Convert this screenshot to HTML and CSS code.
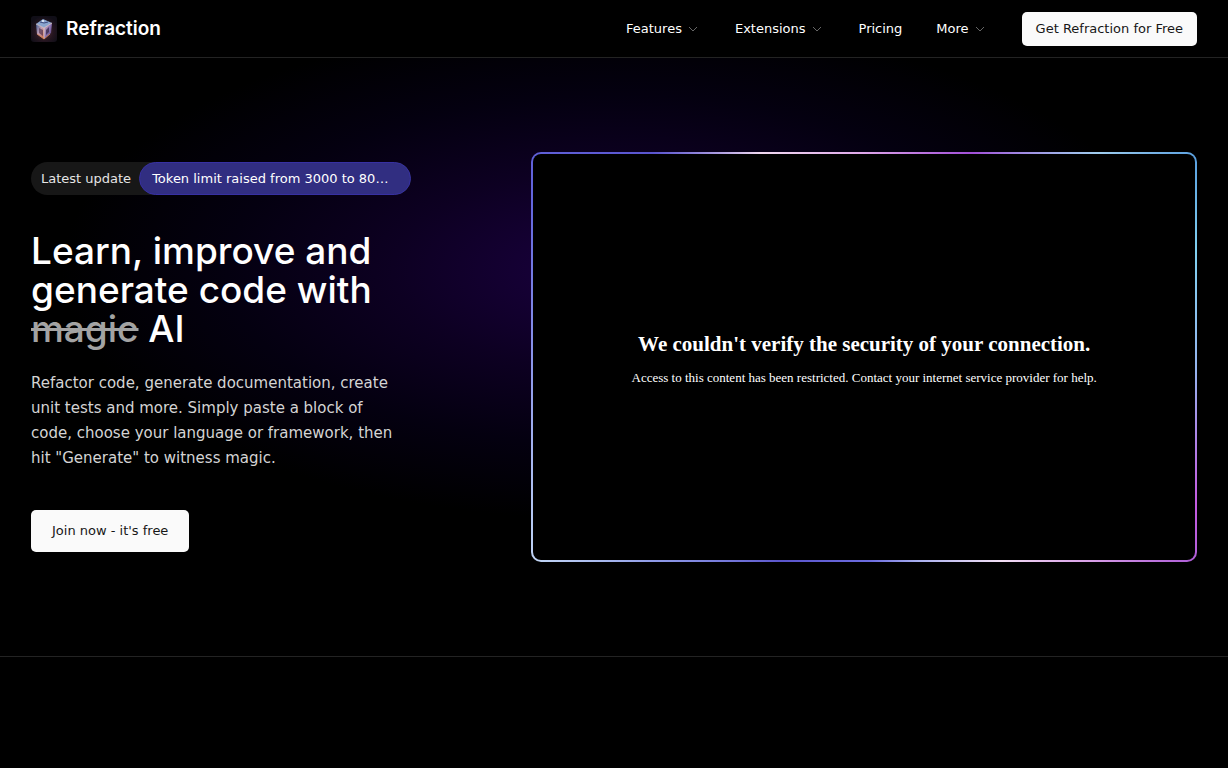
FILE: index.html
```html
<!DOCTYPE html>
<html lang="en">
<head>
  <meta charset="UTF-8">
  <meta name="viewport" content="width=device-width, initial-scale=1">
  <title>Refraction</title>
  <link rel="stylesheet" href="styles.css">
</head>
<body>
  <header class="site-header">
    <a href="#" class="brand">
      <svg class="logo" viewBox="0 0 26 26" aria-hidden="true">
        <defs>
          <radialGradient id="glow" cx="50%" cy="60%" r="60%">
            <stop offset="0" stop-color="#5a3038"/>
            <stop offset="0.6" stop-color="#24151f"/>
            <stop offset="1" stop-color="#100e17"/>
          </radialGradient>
          <linearGradient id="left" x1="0" y1="0" x2="1" y2="1">
            <stop offset="0" stop-color="#3c5f96"/>
            <stop offset="0.5" stop-color="#c59fb4"/>
            <stop offset="1" stop-color="#c4623f"/>
          </linearGradient>
          <linearGradient id="right" x1="0" y1="0" x2="1" y2="1">
            <stop offset="0" stop-color="#d9b7bd"/>
            <stop offset="0.5" stop-color="#8a74b4"/>
            <stop offset="1" stop-color="#4b3567"/>
          </linearGradient>
        </defs>
        <rect width="26" height="26" rx="3" fill="url(#glow)"/>
        <path d="M5 8l7-5 9 4-8 5z" fill="#8aa5cf"/>
        <path d="M5 8l8 4v11l-7-5z" fill="url(#left)"/>
        <path d="M13 12l8-5-1 10-7 6z" fill="url(#right)"/>
        <path d="M8 12l4 2v6l-4-3z" fill="#40213f" opacity="0.6"/>
        <path d="M15 14l3-3v5l-3 3z" fill="#2c203f" opacity="0.7"/>
        <path d="M5 8l8 4 8-5M13 12v11" fill="none" stroke="#f0d8d2" opacity="0.7"/>
        <path d="M6 18l7 5 6-5" fill="none" stroke="#e08a58" opacity="0.8"/>
        <path d="M9 6l4 1 4-1" fill="none" stroke="#3c4a7c"/>
        <circle cx="12" cy="5" r="1" fill="#eef5ff"/>
      </svg>
      <span>Refraction</span>
    </a>
    <nav class="main-nav">
      <button type="button" class="nav-item">Features
        <svg class="chevron" viewBox="0 0 16 16" aria-hidden="true"><path d="M4 6l4 4 4-4"/></svg>
      </button>
      <button type="button" class="nav-item">Extensions
        <svg class="chevron" viewBox="0 0 16 16" aria-hidden="true"><path d="M4 6l4 4 4-4"/></svg>
      </button>
      <a href="#" class="nav-item">Pricing</a>
      <button type="button" class="nav-item">More
        <svg class="chevron" viewBox="0 0 16 16" aria-hidden="true"><path d="M4 6l4 4 4-4"/></svg>
      </button>
      <a href="#" class="btn btn-small">Get Refraction for Free</a>
    </nav>
  </header>

  <main class="hero">
    <div class="intro">
      <a href="#" class="update">
        <span class="update-label">Latest update</span>
        <span class="update-text">Token limit raised from 3000 to 8000 characters</span>
      </a>
      <h1>Learn, improve and generate code with <s>magic</s> AI</h1>
      <p class="lead">Refactor code, generate documentation, create unit tests and more. Simply paste a block of code, choose your language or framework, then hit "Generate" to witness magic.</p>
      <a href="#" class="btn">Join now - it's free</a>
    </div>
    <div class="frame">
      <div class="frame-inner">
        <h2>We couldn't verify the security of your connection.</h2>
        <p>Access to this content has been restricted. Contact your internet service provider for help.</p>
      </div>
    </div>
  </main>
</body>
</html>
```
FILE: styles.css
```css
* {
  box-sizing: border-box;
}
body {
  margin: 0;
  background: #000;
  color: #fff;
  font-family: 'DejaVu Sans', sans-serif;
  font-size: 13px;
}
h1, h2, p {
  margin: 0;
}
a {
  color: inherit;
  text-decoration: none;
}
.site-header {
  display: flex;
  align-items: center;
  justify-content: space-between;
  height: 58px;
  padding: 0 31px;
  border-bottom: 1px solid #232323;
}
.brand {
  display: flex;
  align-items: center;
  gap: 9px;
  font-family: Inter, sans-serif;
  font-size: 19px;
  font-weight: 600;
}
.logo {
  width: 26px;
  height: 26px;
}
.main-nav {
  display: flex;
  align-items: center;
  gap: 34px;
}
.nav-item {
  display: flex;
  align-items: center;
  gap: 3px;
  padding: 0;
  border: none;
  background: none;
  color: #fff;
  font: inherit;
  line-height: 20px;
  cursor: pointer;
}
.chevron {
  width: 16px;
  height: 16px;
  fill: none;
  stroke: #666;
}
.btn {
  display: inline-block;
  padding: 11px 21px;
  border-radius: 5px;
  background: #fafafa;
  color: #171717;
  line-height: 20px;
}
.btn-small {
  padding: 7px 14px;
}
.btn:hover {
  background: #e5e5e5;
}
.hero {
  display: grid;
  grid-template-columns: 4fr 7fr;
  gap: 120px;
  align-items: center;
  padding: 94px 31px;
  border-bottom: 1px solid #232323;
  background: radial-gradient(ellipse 45% 250px at 50% 212px, #1a0040, #0d0022 40%, #040010 70%, #000);
}
.intro {
  min-width: 0;
}
.update {
  display: flex;
  border-radius: 17px;
  background: #171717;
  line-height: 19px;
}
.update-label {
  flex: none;
  padding: 7px 8px 7px 10px;
  color: #e5e5e5;
}
.update-text {
  flex: 1;
  min-width: 0;
  padding: 6px 14px 6px 12px;
  border: 1px solid #3730a3;
  border-radius: 17px;
  background: #312e81;
  overflow: hidden;
  text-overflow: ellipsis;
  white-space: nowrap;
}
h1 {
  margin-top: 36px;
  font-family: Inter, sans-serif;
  font-size: 37px;
  font-weight: 500;
  line-height: 39px;
}
h1 s {
  color: #a3a3a3;
}
.lead {
  max-width: 370px;
  margin: 23px 0 39px;
  color: #d4d4d4;
  font-size: 15px;
  line-height: 25px;
}
.frame {
  display: flex;
  aspect-ratio: 13 / 8;
  padding: 2px;
  border-radius: 10px;
  background: conic-gradient(#dfa6ea, #a24fd8 28deg, #9fcdee 49deg, #5aa0e0 59deg, #7fd0f0 72deg, #94b4ee 92deg, #c45ae0 114deg, #b060d8 122deg, #d9a0e8 132deg, #f3dff5 146deg, #a9b0f0 165deg, #6d6de0 178deg, #5a55cc 202deg, #8f9be8 226deg, #c0d4f5 238deg, #8a94ea 270deg, #6366dd 295deg, #5a55d0 314deg, #f0d8f0 333deg, #dfa6ea);
}
.frame-inner {
  flex: 1;
  display: flex;
  flex-direction: column;
  align-items: center;
  justify-content: center;
  gap: 10px;
  padding-top: 4px;
  border-radius: 8px;
  background: #000;
  font-family: 'Liberation Serif', serif;
  text-align: center;
}
.frame-inner h2 {
  font-size: 21px;
  line-height: 28px;
}
.frame-inner p {
  line-height: 20px;
}
@media (max-width: 900px) {
  .hero {
    grid-template-columns: 1fr;
    gap: 48px;
  }
}
```
